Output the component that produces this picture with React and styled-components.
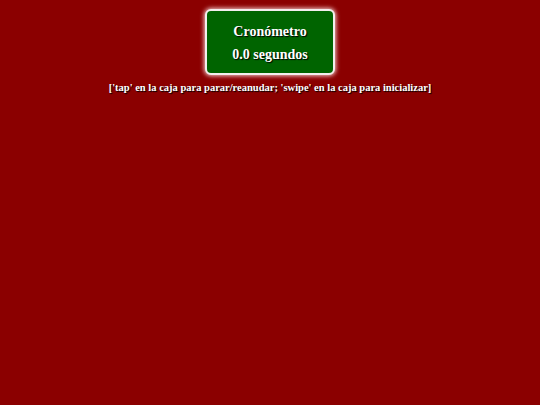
import styled, { createGlobalStyle } from "styled-components"

const Global = createGlobalStyle`
    html, body {
        margin: 0;
        background-color: #8B0000;
    }
`

export default function App () {
    return (
        <>
            <Global />
            <Pagina>
                <Caja>
                    <Linea>Cronómetro</Linea>
                    <Linea>0.0 segundos</Linea>
                </Caja>
                <Ayuda>['tap' en la caja para parar/reanudar; 'swipe' en la caja para inicializar]</Ayuda>
            </Pagina>
        </>
    )
}

const Pagina = styled.div`
    width: 540px;
    height: 405px;
    background-color: #8B0000;
    font-family: "Liberation Serif", serif;
    font-weight: 700;
    color: #FFFFFF;

    display: flex;
    flex-direction: column;
    align-items: center;
    padding-top: 9px;
    box-sizing: border-box;
`
const Caja = styled.div`
    width: 130px;
    height: 66px;
    box-sizing: border-box;
    padding-top: 2px;
    background-color: #006400;
    border: 2px solid #F4EEEE;
    border-radius: 6px;
    box-shadow: 0 0 4px 1px #F2C8C8;

    display: flex;
    flex-direction: column;
    align-items: center;
    justify-content: center;
    gap: 7px;
`
const Linea = styled.div`
    font-size: 14px;
    line-height: 16px;
    text-shadow: 1px 1px 1px #000000;
`
const Ayuda = styled.div`
    margin-top: 6px;
    font-size: 10.5px;
    line-height: 14px;
    text-shadow: 1px 1px 1px #000000;
`
